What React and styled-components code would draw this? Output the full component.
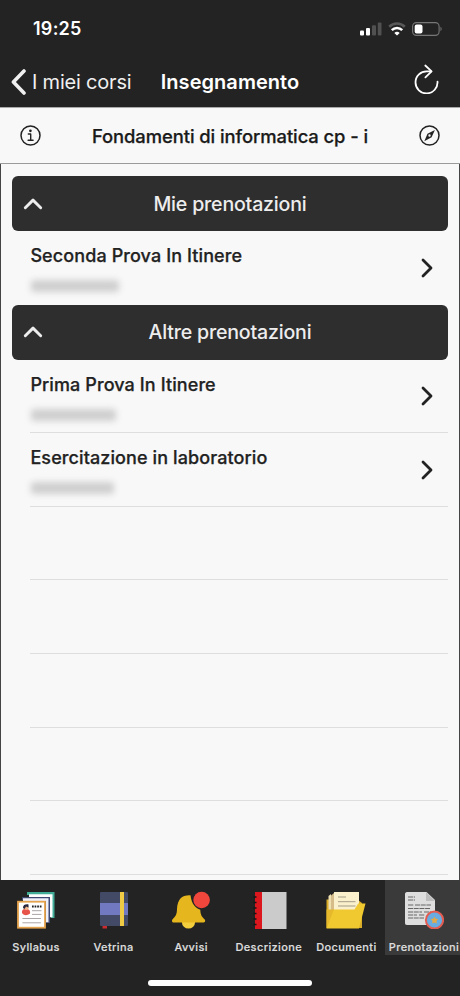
import React from "react";
import styled, { createGlobalStyle } from "styled-components";

const GlobalStyle = createGlobalStyle`
  * { box-sizing: border-box; }
  body { margin: 0; background: #232323; font-family: Inter, "Liberation Sans", sans-serif; }
`;

const Screen = styled.div`
  width: 460px;
  height: 996px;
  display: flex;
  flex-direction: column;
  overflow: hidden;
  background: #232323;
`;

const StatusBar = styled.div`
  height: 55px;
  flex: none;
  display: flex;
  align-items: center;
  justify-content: space-between;
  padding: 2px 17px 0 33px;
  color: #fff;
`;

const Clock = styled.span`
  font-size: 18px;
  font-weight: 600;
  letter-spacing: 0.25px;
`;

const StatusIcons = styled.div`
  display: flex;
  align-items: center;
  gap: 6px;
`;

const NavBar = styled.header`
  height: 53px;
  flex: none;
  display: grid;
  grid-template-columns: 150px 160px 150px;
  align-items: center;
  color: #fff;
  border-bottom: 1px solid #aaa;
`;

const BackButton = styled.div`
  display: flex;
  align-items: center;
  gap: 5px;
  padding: 1px 0 0 11px;
  font-size: 20px;
  letter-spacing: -0.2px;
  white-space: nowrap;
  color: #f0f0f0;
`;

const NavTitle = styled.h1`
  margin: 0;
  padding-top: 1px;
  text-align: center;
  font-size: 20px;
  font-weight: 600;
  letter-spacing: 0.05px;
`;

const RefreshButton = styled.div`
  display: flex;
  justify-content: flex-end;
  padding: 0 21px 4px 0;
`;

const CourseBar = styled.div`
  height: 56px;
  flex: none;
  display: flex;
  align-items: center;
  justify-content: space-between;
  padding: 0 20px;
  background: #f8f8f8;
  border-bottom: 1px solid #9b9b9b;
  color: #222;
`;

const CourseTitle = styled.h2`
  margin: 0;
  font-size: 18.4px;
  font-weight: 500;
  letter-spacing: -0.07px;
  white-space: nowrap;
  color: #1a1a1a;
  -webkit-text-stroke: 0.25px currentColor;
`;

const Content = styled.main`
  height: 716px;
  flex: none;
  overflow: hidden;
  padding: 12px 11px 0;
  background: #f8f8f8;
  border: solid #444;
  border-width: 0 1px;
`;

const SectionHeader = styled.div`
  height: 55px;
  display: grid;
  grid-template-columns: 42px 1fr 42px;
  align-items: center;
  border-radius: 6px;
  background: #2e2e2e;
  color: #ededed;
  font-size: 19.6px;
  font-weight: 500;
  letter-spacing: -0.2px;
  text-align: center;
  svg { justify-self: center; }
`;

const Row = styled.div`
  height: 73.6px;
  margin-left: 18px;
  padding: 13px 15px 0 0;
  display: flex;
  justify-content: space-between;
  border-bottom: 1px solid ${(p) => (p.$last ? "transparent" : "#dedede")};
  > svg { margin-top: 13.5px; }
`;

const RowTitle = styled.div`
  padding-left: 0.4px;
  font-size: 18px;
  line-height: 24px;
  font-weight: 500;
  color: #222;
  white-space: nowrap;
  letter-spacing: 0.1px;
  -webkit-text-stroke: 0.25px currentColor;
`;

const HiddenDate = styled.div`
  width: ${(p) => p.$width}px;
  height: 12px;
  margin: 12px 0 0 1px;
  border-radius: 3px;
  background: #cfcfcf;
  filter: blur(3px);
`;

const TabBar = styled.nav`
  height: 74px;
  flex: none;
  display: grid;
  grid-template-columns: repeat(6, 77.6px);
  margin-left: -2.8px;
`;

const Tab = styled.div`
  display: flex;
  flex-direction: column;
  align-items: center;
  padding-top: 11px;
  color: #dedede;
  font-size: 11px;
  line-height: 16px;
  font-weight: 500;
  letter-spacing: 0.38px;
  -webkit-text-stroke: 0.2px currentColor;
  white-space: nowrap;
  background: ${(p) => (p.$active ? "#3a3a3a" : "transparent")};
  svg { flex: none; margin-bottom: 10px; }
`;

const HomeArea = styled.div`
  flex: 1;
  display: flex;
  justify-content: center;
  padding-top: 26px;
`;

const HomeIndicator = styled.div`
  width: 164px;
  height: 6px;
  border-radius: 3px;
  background: #fff;
`;

const stroke = { fill: "none", stroke: "currentColor", strokeLinecap: "round", strokeLinejoin: "round" };

const SignalIcon = () => (
  <svg width="22" height="14" viewBox="0 0 22 14">
    <rect x="0" y="8.5" width="4" height="5" rx="1" fill="#fff" />
    <rect x="6" y="6" width="4" height="7.5" rx="1" fill="#fff" />
    <rect x="12" y="3.2" width="4" height="10.3" rx="1" fill="#515151" />
    <rect x="17.8" y="0.5" width="3.7" height="13" rx="1" fill="#515151" />
  </svg>
);

const WifiIcon = () => (
  <svg width="18" height="14" viewBox="0 0 18 14" fill="none">
    <path d="M1.2 4.7a11.2 11.2 0 0 1 15.6 0" stroke="#585858" strokeWidth="2.6" />
    <path d="M3.8 8.1a7.3 7.3 0 0 1 10.4 0" stroke="#fff" strokeWidth="2.5" />
    <path d="M9 13.5 6.3 10.9a4 4 0 0 1 5.4 0Z" fill="#fff" />
  </svg>
);

const BatteryIcon = () => (
  <svg width="31" height="14" viewBox="0 0 31 14">
    <rect x="0.6" y="0.6" width="26.5" height="12.8" rx="3.8" fill="none" stroke="#777" strokeWidth="1.1" />
    <rect x="2.7" y="2.6" width="7.8" height="8.8" rx="2" fill="#fff" />
    <path d="M28.5 4.8c1.4.5 1.4 3.9 0 4.4Z" fill="#777" />
  </svg>
);

const BackIcon = () => (
  <svg width="16" height="26" viewBox="0 0 16 26" {...stroke} strokeWidth="3.6">
    <path d="M13 2 2.4 13 13 24" />
  </svg>
);

const RefreshIcon = () => (
  <svg width="26" height="30" viewBox="0 0 26 30" {...stroke} strokeWidth="1.8">
    <path d="M18.2 7.4H14a11 11 0 1 0 10.5 10.2" />
    <path d="m12.3 1.5 6.3 5.9-6.2 5.9" />
  </svg>
);

const InfoIcon = () => (
  <svg width="21" height="21" viewBox="0 0 21 21" {...stroke} strokeWidth="1.5">
    <circle cx="10.5" cy="10.5" r="9.5" />
    <path d="M8.3 9h2.4v6M8.1 15.2h5" strokeWidth="1.4" />
    <circle cx="10.4" cy="5.8" r="1.35" fill="currentColor" stroke="none" />
  </svg>
);

const CompassIcon = () => (
  <svg width="21" height="21" viewBox="0 0 21 21" {...stroke} strokeWidth="1.5">
    <circle cx="10.5" cy="10.5" r="9.5" />
    <path fillRule="evenodd" d="M15.9 4.9 12.6 12.2 5.3 16.2 8.5 8.8Zm-5.4 4.4a1.2 1.2 0 1 0 .01 2.4 1.2 1.2 0 0 0 0-2.4Z" fill="currentColor" stroke="none" />
  </svg>
);

const ChevronUp = () => (
  <svg width="20" height="12" viewBox="0 0 20 12" {...stroke} strokeWidth="2.9">
    <path d="M2.3 9.7 10 2.1l7.7 7.6" />
  </svg>
);

const ChevronRight = () => (
  <svg width="12" height="20" viewBox="0 0 12 20" {...stroke} stroke="#222" strokeWidth="2.8">
    <path d="m2 2 8 8-8 8" />
  </svg>
);

const SyllabusIcon = () => (
  <svg width="38" height="38" viewBox="0 0 38 38">
    <path d="M10 1h27.5v26H34V4H10Z" fill="#41ac98" />
    <path d="M12 3.3h23.5v23H32V7H12Z" fill="#fff" />
    <path d="M5 6h28v26h-4V9H5Z" fill="#3e4972" />
    <path d="M6 7.3h25.5v24H29V10H6Z" fill="#eef0fb" />
    <rect x="1" y="10.7" width="27" height="26" fill="#fff" stroke="#e5a34e" strokeWidth="1.8" />
    <path d="M5 22c-.4-3 1.5-4.3 4-4.3s4.6 1.6 4 4.8c-3 2.5-6 2.2-8-.5Z" fill="#e6544a" />
    <circle cx="9.3" cy="16.7" r="2.4" fill="#f0b58c" />
    <path d="M6 17c0-3 2-4 5.5-3.6v3L9 15.5 7.5 18Z" fill="#29273c" />
    <path d="M15 15.5h9.5" stroke="#222" strokeWidth="2" strokeDasharray="1.7 .9" />
    <path d="M15 19.7h9.5M15 23.4h9.5M5.4 27.5h18.5M5.4 31.8h18.5" stroke="#aaa5a5" />
  </svg>
);

const VetrinaIcon = () => (
  <svg width="38" height="38" viewBox="0 0 38 38">
    <path d="M7.5 34h4.5v3.5H7.5Z" fill="#c92b31" />
    <rect x="5" y="1" width="28" height="34" rx="1" fill="#424a65" />
    <rect x="5" y="12" width="28" height="12" fill="#717ac0" />
    <rect x="25" y="1" width="4" height="34" fill="#efcb45" />
  </svg>
);

const AvvisiIcon = () => (
  <svg width="38" height="38" viewBox="0 0 38 38">
    <circle cx="16.5" cy="31" r="6.6" fill="#f4cf3d" />
    <path d="M5 18C5.5 8 10 3.8 18.5 4.2c1.2 9.5 5 12.5 9.8 14.5.2 5.8 1.7 6.8 4.4 9.8.9 1.1.4 3-1.2 3H1.6C.1 31.5-.4 29.6.4 28.5 3.6 25 4.8 24 5 18Z" fill="#e5b61d" />
    <circle cx="29.6" cy="9" r="8.3" fill="#f1463c" />
  </svg>
);

const DescrizioneIcon = () => (
  <svg width="38" height="38" viewBox="0 0 38 38">
    <rect x="5" y="1" width="8" height="37" fill="#dd171e" />
    <rect x="12" y="1" width="24.5" height="37" fill="#cbcbcb" />
    <path d="M3.5 6h3M3.5 11.5h3M3.5 17h3M3.5 22.5h3M3.5 28h3M3.5 33.5h3" stroke="#161616" strokeWidth="1.5" />
  </svg>
);

const DocumentiIcon = () => (
  <svg width="40" height="38" viewBox="0 0 40 38">
    <path d="M.5 8.5h31L36 12v25H.5Z" fill="#d8ab28" />
    <path d="M2.5 5 5 3v30L2.5 35Z" fill="#efe0b2" />
    <path d="M5 4.5 8 2v30H5Z" fill="#d5bc88" />
    <path d="M8 1h25v20H8Z" fill="#faf0cc" />
    <path d="M12 6h8M12 10.7h17.5M12 15h17.5" stroke="#a49d88" />
    <path d="M.5 37.5 7 18.5h21.5l3.7-6h7.3L33 37.5Z" fill="#f0c830" />
    <path d="M.5 18.5H8L.5 37.5Z" fill="#e5b92b" />
  </svg>
);

const PrenotazioniIcon = () => (
  <svg width="40" height="38" viewBox="0 0 40 38">
    <path d="M3 1h19.5l8.5 8v25H3c-1.5 0-2-1-2-2V3c0-1 .7-2 2-2Z" fill="#dedede" />
    <path d="M22 1v9h9Z" fill="#bdbdbd" />
    <path d="M4 6h7M4 9h7M4 14h6M11 14h16M4 17.5h22M4 21h14M20 21h7M4 24h9M15 24h6M4 27h16" stroke="#666" strokeWidth="1.1" strokeDasharray="5 .7" />
    <circle cx="30.5" cy="29" r="8.6" fill="#68ace1" stroke="#e45c50" strokeWidth="2" />
    <path d="m30.5 25.5 1.2 2.2 2.5.4-1.7 1.9.3 2.4-2.3-1-2.3 1 .3-2.4-1.7-1.9 2.5-.4Z" fill="#e4aa47" />
  </svg>
);

const tabs = [
  ["Syllabus", SyllabusIcon],
  ["Vetrina", VetrinaIcon],
  ["Avvisi", AvvisiIcon],
  ["Descrizione", DescrizioneIcon],
  ["Documenti", DocumentiIcon],
  ["Prenotazioni", PrenotazioniIcon],
];

const Booking = ({ title, dateWidth, last }) => (
  <Row $last={last}>
    <div>
      <RowTitle>{title}</RowTitle>
      <HiddenDate $width={dateWidth} />
    </div>
    <ChevronRight />
  </Row>
);

const Section = ({ title }) => (
  <SectionHeader>
    <ChevronUp />
    <span>{title}</span>
  </SectionHeader>
);

export default function App() {
  return (
    <Screen>
      <GlobalStyle />
      <StatusBar>
        <Clock>19:25</Clock>
        <StatusIcons>
          <SignalIcon />
          <WifiIcon />
          <BatteryIcon />
        </StatusIcons>
      </StatusBar>
      <NavBar>
        <BackButton>
          <BackIcon />
          <span>I miei corsi</span>
        </BackButton>
        <NavTitle>Insegnamento</NavTitle>
        <RefreshButton>
          <RefreshIcon />
        </RefreshButton>
      </NavBar>
      <CourseBar>
        <InfoIcon />
        <CourseTitle>Fondamenti di informatica cp - i</CourseTitle>
        <CompassIcon />
      </CourseBar>
      <Content>
        <Section title="Mie prenotazioni" />
        <Booking title="Seconda Prova In Itinere" dateWidth={88} last />
        <Section title="Altre prenotazioni" />
        <Booking title="Prima Prova In Itinere" dateWidth={85} />
        <Booking title="Esercitazione in laboratorio" dateWidth={83} />
        {[0, 1, 2, 3, 4].map((i) => (
          <Row key={i} />
        ))}
      </Content>
      <TabBar>
        {tabs.map(([label, Icon]) => (
          <Tab key={label} $active={label === "Prenotazioni"}>
            <Icon />
            <span>{label}</span>
          </Tab>
        ))}
      </TabBar>
      <HomeArea>
        <HomeIndicator />
      </HomeArea>
    </Screen>
  );
}
